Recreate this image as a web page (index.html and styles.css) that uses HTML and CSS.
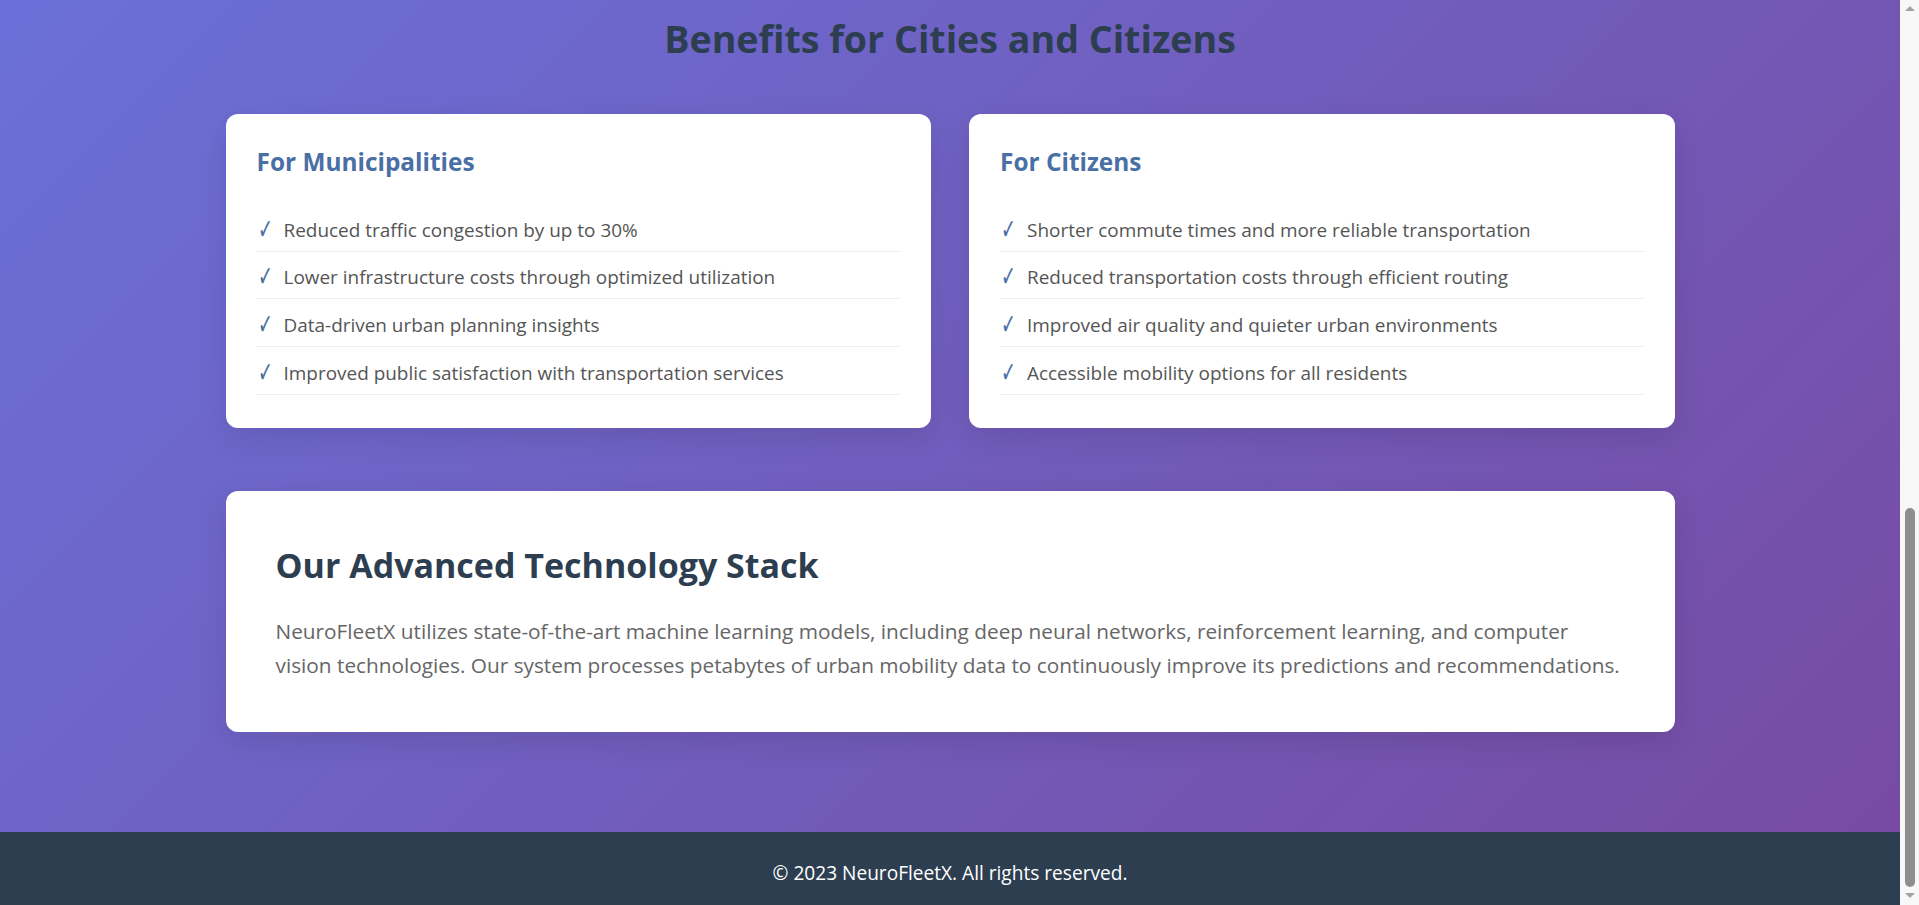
FILE: index.html
```html
<!DOCTYPE html>
<html lang="en">
<head>
<meta charset="utf-8">
<title>NeuroFleetX - Benefits</title>
<link rel="stylesheet" href="styles.css">
</head>
<body>
<main class="page">
  <section class="benefits">
    <div class="container">
      <h2 class="section-title">Benefits for Cities and Citizens</h2>
      <div class="benefit-grid">
        <div class="card">
          <h3 class="card-title">For Municipalities</h3>
          <ul class="check-list">
            <li>Reduced traffic congestion by up to 30%</li>
            <li>Lower infrastructure costs through optimized utilization</li>
            <li>Data-driven urban planning insights</li>
            <li>Improved public satisfaction with transportation services</li>
          </ul>
        </div>
        <div class="card">
          <h3 class="card-title">For Citizens</h3>
          <ul class="check-list">
            <li>Shorter commute times and more reliable transportation</li>
            <li>Reduced transportation costs through efficient routing</li>
            <li>Improved air quality and quieter urban environments</li>
            <li>Accessible mobility options for all residents</li>
          </ul>
        </div>
      </div>
      <div class="tech-card">
        <h2 class="tech-title">Our Advanced Technology Stack</h2>
        <p class="tech-text">NeuroFleetX utilizes state-of-the-art machine learning models, including deep neural networks, reinforcement learning, and computer vision technologies. Our system processes petabytes of urban mobility data to continuously improve its predictions and recommendations.</p>
      </div>
    </div>
  </section>
</main>
<footer class="site-footer">
  <p class="footer-text">© 2023 NeuroFleetX. All rights reserved.</p>
</footer>
<aside class="scrollbar" aria-hidden="true">
  <span class="sb-arrow sb-up"></span>
  <span class="sb-thumb"></span>
  <span class="sb-arrow sb-down"></span>
</aside>
</body>
</html>
```

FILE: styles.css
```css
body {
  margin: 0 19px 0 0;
  font-family: "Open Sans", "Noto Sans", sans-serif;
}

.page {
  background: linear-gradient(135deg, #6a70d8 0%, #774ba3 100%);
  padding: 15px 0 100px;
}

.container {
  width: 1449px;
  margin: 0 auto;
}

.section-title {
  margin: 0 0 51px;
  text-align: center;
  font-size: 37.6px;
  line-height: 48px;
  font-weight: 700;
  color: #2c3e50;
}

.benefit-grid {
  display: grid;
  grid-template-columns: 1fr 1fr;
  gap: 38px;
}

.card {
  background: #fff;
  border-radius: 12px;
  padding: 31px 31px 33px;
  box-shadow: 0 10px 30px rgba(0, 0, 0, 0.1);
}

.card-title {
  margin: 0 0 25px;
  font-size: 24.4px;
  line-height: 34px;
  font-weight: 700;
  color: #4a6fa5;
}

.check-list {
  list-style: none;
  margin: 0;
  padding: 0;
}

.check-list li {
  padding: 10.5px 0 6.2px;
  font-size: 18.95px;
  line-height: 30px;
  color: #555;
  border-bottom: 1px solid #eee;
}

.check-list li::before {
  content: "\2713";
  display: inline-block;
  width: 27px;
  font-family: "DejaVu Sans", sans-serif;
  font-size: 21px;
  line-height: 20px;
  color: #4a6fa5;
  transform: scale(0.85, 1.35);
  transform-origin: 6px 60%;
}

.tech-card {
  margin-top: 63px;
  background: #fff;
  border-radius: 12px;
  padding: 50px;
  box-shadow: 0 10px 30px rgba(0, 0, 0, 0.1);
}

.tech-title {
  margin: 0 0 25px;
  font-size: 34px;
  line-height: 48px;
  font-weight: 700;
  color: #2c3e50;
}

.tech-text {
  margin: 0;
  font-size: 20.8px;
  line-height: 34.3px;
  color: #666;
}

.site-footer {
  background: #2c3e50;
  color: #fff;
  text-align: center;
  padding: 26px 0 17px;
}

.footer-text {
  margin: 0;
  font-size: 19.1px;
  line-height: 30px;
}

.scrollbar {
  position: fixed;
  top: 0;
  right: 0;
  width: 19px;
  height: 100vh;
  background: #f8f8f8;
  display: flex;
  flex-direction: column;
  align-items: center;
}

.sb-arrow {
  width: 0;
  height: 0;
  border-left: 5px solid transparent;
  border-right: 5px solid transparent;
}

.sb-up {
  margin-top: 6px;
  border-bottom: 5px solid #a3a3a3;
}

.sb-thumb {
  width: 10px;
  height: 379px;
  margin-top: 497px;
  border-radius: 5px;
  background: #8e8e8e;
}

.sb-down {
  margin-top: 6px;
  border-top: 5px solid #a3a3a3;
}
```
